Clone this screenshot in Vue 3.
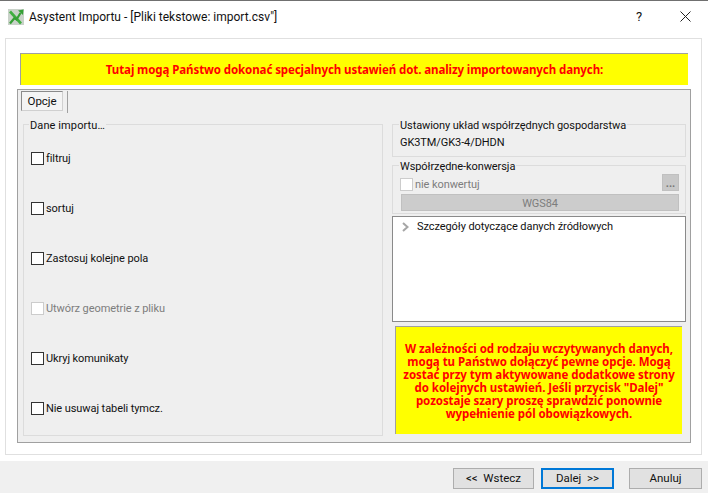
<script setup>
const options = [
  { label: 'filtruj' },
  { label: 'sortuj' },
  { label: 'Zastosuj kolejne pola' },
  { label: 'Utwórz geometrie z pliku', disabled: true },
  { label: 'Ukryj komunikaty' },
  { label: 'Nie usuwaj tabeli tymcz.' },
]
</script>

<template>
  <div class="window">
    <header class="titlebar">
      <svg class="app-icon" width="16" height="16" viewBox="0 0 16 16">
        <rect width="16" height="16" fill="#c9d2c9" />
        <path d="M2 2.500 L13 14.500" stroke="#3fae3f" stroke-width="2.600" fill="none" />
        <path d="M2 14.500 L6.500 9 L8.500 10.500 L12.500 4" stroke="#35a035" stroke-width="2.200" fill="none" />
        <path d="M10 1.500 L15.500 0.500 L15 6 Z" fill="#35a035" />
      </svg>
      <span class="title">Asystent Importu - [Pliki tekstowe: import.csv"]</span>
      <span class="help">?</span>
      <svg class="close" width="11" height="11" viewBox="0 0 11 11">
        <path d="M0.500 0.500 L10.500 10.500 M10.500 0.500 L0.500 10.500" stroke="#222" stroke-width="1" fill="none" />
      </svg>
    </header>

    <main class="page">
      <div class="banner">Tutaj mogą Państwo dokonać specjalnych ustawień dot. analizy importowanych danych:</div>

      <section class="tabs">
        <div class="tabstrip"><div class="tab"><span>Opcje</span></div></div>
        <div class="tab-body">
          <div class="group left-group">
            <span class="legend">Dane importu…</span>
            <label v-for="o in options" :key="o.label" class="check" :class="{ disabled: o.disabled }">
              <i class="box"></i>{{ o.label }}
            </label>
          </div>

          <div class="right">
            <div class="group crs">
              <span class="legend">Ustawiony układ współrzędnych gospodarstwa</span>
              GK3TM/GK3-4/DHDN
            </div>
            <div class="group convert">
              <span class="legend">Współrzędne-konwersja</span>
              <div class="convert-row">
                <label class="check disabled"><i class="box"></i>nie konwertuj</label>
                <span class="dots">...</span>
              </div>
              <div class="wgs">WGS84</div>
            </div>
            <div class="tree">
              <svg width="9" height="10" viewBox="0 0 9 10">
                <path d="M2 1 L6.500 5 L2 9" stroke="#a6a6a6" stroke-width="2" fill="none" />
              </svg>
              <span>Szczegóły dotyczące danych źródłowych</span>
            </div>
            <div class="note">
              W zależności od rodzaju wczytywanych danych,<br />
              mogą tu Państwo dołączyć pewne opcje. Mogą<br />
              zostać przy tym aktywowane dodatkowe strony<br />
              do kolejnych ustawień. Jeśli przycisk "Dalej"<br />
              pozostaje szary proszę sprawdzić ponownie<br />
              wypełnienie pól obowiązkowych.
            </div>
          </div>
        </div>
      </section>
    </main>

    <footer class="footer">
      <button class="btn back">&lt;&lt;&nbsp; Wstecz</button>
      <button class="btn next">Dalej &nbsp;&gt;&gt;</button>
      <button class="btn cancel">Anuluj</button>
    </footer>
  </div>
</template>

<style>
html, body { margin: 0; background: #fff; }
</style>

<style scoped>
.window {
  width: 708px;
  height: 493px;
  box-sizing: border-box;
  border-top: 1px solid #707070;
  background: #fff;
  font: 11px/16px Roboto, "Noto Sans", sans-serif;
  letter-spacing: -0.080px;
  color: #111;
  display: flex;
  flex-direction: column;
  overflow: hidden;
}
.titlebar {
  height: 37px;
  flex: none;
  display: flex;
  align-items: center;
  padding: 0 17px 6px 8px;
  box-sizing: border-box;
  font-size: 12px;
  letter-spacing: 0;
}
.app-icon { margin-right: 5px; }
.title { flex: 1; }
.help { width: 8px; margin-right: 36px; font-size: 13px; }
.page {
  flex: none;
  margin: 0 6px 6px 5px;
  height: 417px;
  box-sizing: border-box;
  border: 1px solid #e0e0e0;
  padding: 14px 10px 11px 11px;
  background: #fff;
}
.banner {
  margin: 0 3px 0 3px;
  height: 32px;
  box-sizing: border-box;
  border-top: 1px solid #a0a0a0;
  border-left: 1px solid #a0a0a0;
  background: #ff0;
  color: #f00;
  font: 700 11.500px/31px "Noto Sans", sans-serif;
  letter-spacing: -0.090px;
  text-align: center;
}
.tabs {
  margin-top: 4px;
  height: 354px;
  box-sizing: border-box;
  border: 1px solid #a0a0a0;
  background: #efefef;
  display: flex;
  flex-direction: column;
}
.tabstrip { height: 23px; padding: 1px 0 0 3px; box-sizing: border-box; flex: none; }
.tab {
  width: 47px;
  height: 22px;
  box-sizing: border-box;
  border-right: 1px solid #a0a0a0;
  padding-right: 4px;
}
.tab span {
  display: block;
  height: 20px;
  border: 1px solid #8a8a8a;
  border-right-color: #d0d0d0;
  border-bottom-color: #d0d0d0;
  background: #f4f4f4;
  box-sizing: border-box;
  text-align: center;
  line-height: 18px;
  font-size: 11.500px;
}
.tab-body {
  flex: 1;
  display: grid;
  grid-template-columns: 360px 294px;
  column-gap: 9px;
  padding: 11px 4px 6px 5px;
  min-height: 0;
}
.group {
  position: relative;
  border: 1px solid #dcdcdc;
  box-sizing: border-box;
}
.legend {
  position: absolute;
  top: -7px;
  left: 6px;
  background: #efefef;
  padding: 0 1px;
  white-space: nowrap;
  line-height: 15px;
}
.left-group {
  display: flex;
  flex-direction: column;
  gap: 34px;
  padding: 26px 0 0 7px;
}
.left-group .legend { left: 5px; letter-spacing: 0.1px; }
.check {
  display: flex;
  align-items: center;
  height: 16px;
}
.box {
  width: 13px;
  height: 13px;
  border: 1px solid #333;
  box-sizing: border-box;
  background: #fff;
  margin-right: 2px;
  margin-bottom: 2px;
}
.check.disabled { color: #7d7d7d; }
.check.disabled .box { border-color: #ccc; }
.right { display: flex; flex-direction: column; min-height: 0; }
.crs { height: 33px; padding: 10px 6px 0 7px; }
.convert { margin-top: 8px; height: 49px; padding: 8px 7px 0 7px; }
.convert-row { display: flex; justify-content: space-between; align-items: flex-start; height: 17px; }
.convert-row .check { margin-top: 3px; }
.dots {
  width: 17px;
  height: 17px;
  background: #c8c8c8;
  border: 1px solid #c0c0c0;
  box-sizing: border-box;
  color: #777;
  text-align: center;
  line-height: 17px;
  font-weight: 700;
  margin-right: -1px;
}
.wgs {
  margin: 3px -1px 0 1px;
  height: 17px;
  background: #ccc;
  border: 1px solid #c0c0c0;
  box-sizing: border-box;
  color: #7d7d7d;
  text-align: center;
  line-height: 17px;
}
.tree {
  margin-top: 2px;
  height: 106px;
  box-sizing: border-box;
  border: 1px solid #8a8a8a;
  background: #fff;
  padding: 2px 0 0 8px;
  display: flex;
  gap: 7px;
  align-items: flex-start;
}
.tree svg { margin-top: 3px; }
.note {
  margin: 4px 4px 0 3px;
  height: 108px;
  box-sizing: border-box;
  border-top: 1px solid #a0a0a0;
  border-left: 1px solid #a0a0a0;
  background: #ff0;
  color: #f00;
  font: 700 11.500px/13px "Noto Sans", sans-serif;
  letter-spacing: -0.050px;
  text-align: center;
  padding-top: 15px;
}
.footer {
  flex: 1;
  background: #f0f0f0;
  display: flex;
  padding: 7px 6px 0 453px;
  box-sizing: border-box;
  align-items: flex-start;
}
.btn {
  height: 21px;
  box-sizing: border-box;
  border: 1px solid #adadad;
  background: #e1e1e1;
  font: inherit;
  font-size: 11.500px;
  line-height: 17px;
  letter-spacing: 0;
  padding: 0;
  color: #111;
}
.back { width: 81px; }
.next { width: 73px; margin-left: 7px; border: 2px solid #0078d7; }
.cancel { width: 73px; margin-left: 15px; }
</style>
